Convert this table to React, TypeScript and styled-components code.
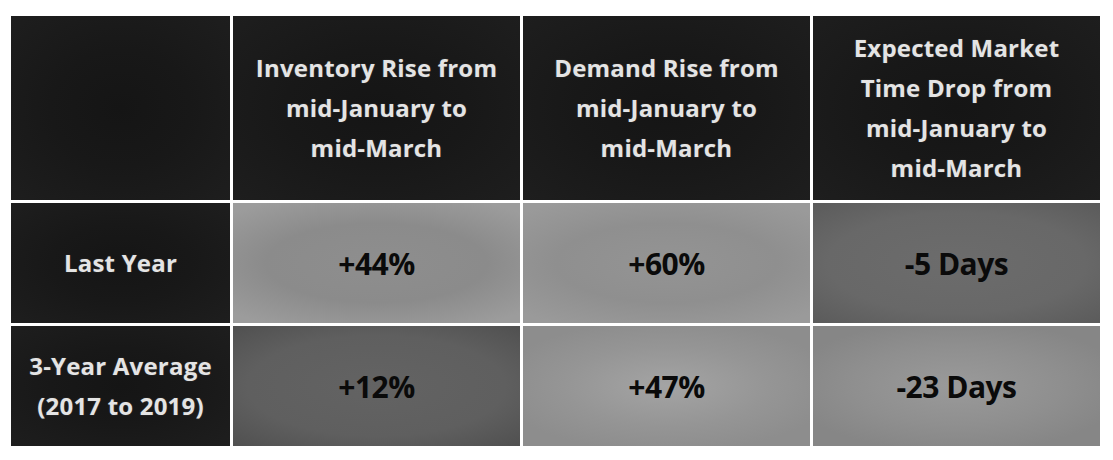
import React from 'react';
import styled, { createGlobalStyle } from 'styled-components';

const GlobalStyle = createGlobalStyle`
  html, body {
    margin: 0;
    padding: 0;
    background: #ffffff;
  }
  body {
    font-family: 'Open Sans', Lato, 'Liberation Sans', sans-serif;
  }
`;

const Page = styled.div`
  width: 1113px;
  height: 460px;
  padding: 16px 0 0 11px;
  box-sizing: border-box;
`;

const Table = styled.div`
  display: grid;
  grid-template-columns: 219px 287px 287px 287px;
  grid-template-rows: 184px 120px 120px;
  gap: 3px;
`;

const Cell = styled.div`
  display: flex;
  align-items: center;
  justify-content: center;
  text-align: center;
  box-sizing: border-box;
`;

const DarkCell = styled(Cell)`
  background: radial-gradient(ellipse at center, #151515 0%, #181818 45%, #1e1e1e 100%);
  color: #e4e4e4;
  font-weight: 700;
  font-size: 24px;
  line-height: 40px;
  letter-spacing: 0.2px;
  text-shadow: 0 0 2px rgba(255, 255, 255, 0.15);
`;

const ValueCell = styled(Cell)<{ $bg: string }>`
  background: ${({ $bg }) => $bg};
  color: #0a0a0a;
  font-weight: 700;
  font-size: 30px;
  letter-spacing: -0.5px;
`;

const shades = {
  light: 'radial-gradient(ellipse 70% 60% at center, #8e8e8e 0%, #8b8b8b 55%, #9c9c9c 100%)',
  mid: 'radial-gradient(ellipse 70% 60% at center, #949494 0%, #8f8f8f 55%, #9a9a9a 100%)',
  dark: 'radial-gradient(ellipse 75% 70% at center, #6c6c6c 0%, #686868 60%, #5a5a5a 100%)',
  darker: 'radial-gradient(ellipse 75% 70% at center, #636363 0%, #5f5f5f 60%, #4f4f4f 100%)',
  glow: 'radial-gradient(ellipse 60% 55% at center, #a4a4a4 0%, #959595 60%, #8d8d8d 100%)',
  soft: 'radial-gradient(ellipse 60% 55% at center, #9a9a9a 0%, #8f8f8f 60%, #868686 100%)',
};

const headers = [
  ['Inventory Rise from', 'mid-January to', 'mid-March'],
  ['Demand Rise from', 'mid-January to', 'mid-March'],
  ['Expected Market', 'Time Drop from', 'mid-January to', 'mid-March'],
];

const rows = [
  {
    label: ['Last Year'],
    values: [
      { text: '+44%', bg: shades.light },
      { text: '+60%', bg: shades.mid },
      { text: '-5 Days', bg: shades.dark },
    ],
  },
  {
    label: ['3-Year Average', '(2017 to 2019)'],
    values: [
      { text: '+12%', bg: shades.darker },
      { text: '+47%', bg: shades.glow },
      { text: '-23 Days', bg: shades.soft },
    ],
  },
];

const Lines: React.FC<{ lines: string[] }> = ({ lines }) => (
  <div>
    {lines.map((l, i) => (
      <div key={i}>{l}</div>
    ))}
  </div>
);

export default function App() {
  return (
    <>
      <GlobalStyle />
      <Page>
        <Table>
          <DarkCell />
          {headers.map((h, i) => (
            <DarkCell key={i}>
              <Lines lines={h} />
            </DarkCell>
          ))}
          {rows.map((r, ri) => (
            <React.Fragment key={ri}>
              <DarkCell>
                <Lines lines={r.label} />
              </DarkCell>
              {r.values.map((v, vi) => (
                <ValueCell key={vi} $bg={v.bg}>
                  {v.text}
                </ValueCell>
              ))}
            </React.Fragment>
          ))}
        </Table>
      </Page>
    </>
  );
}
